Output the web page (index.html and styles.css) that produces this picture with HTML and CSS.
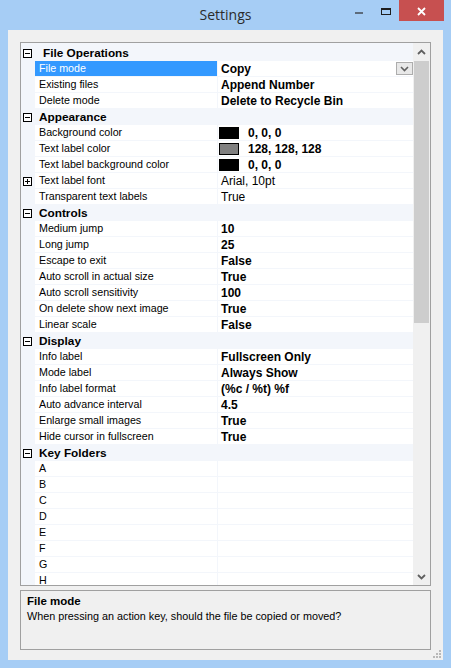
FILE: index.html
```html
<!DOCTYPE html>
<html>
<head>
<meta charset="utf-8">
<title>Settings</title>
<link rel="stylesheet" href="styles.css">
</head>
<body>
<div class="window">
  <div class="titlebar">
    <div></div>
    <div class="title">Settings</div>
    <div class="controls">
      <svg class="ctl" width="26" height="21" viewBox="0 0 26 21"><rect x="8" y="12" width="8" height="2" fill="#5c6b7c"/></svg>
      <svg class="ctl" width="26" height="21" viewBox="0 0 26 21"><rect x="8.5" y="8.5" width="9" height="6" fill="none" stroke="#1e1e1e"/><rect x="8" y="8" width="10" height="2" fill="#1e1e1e"/></svg>
      <svg class="close" width="45" height="21" viewBox="0 0 45 21"><path d="M19 8 L26 15 M26 8 L19 15" stroke="#fff" stroke-width="1.8" fill="none"/></svg>
    </div>
  </div>
  <div class="client">
    <div class="grid">
      <div class="rows">
        <div class="cat"><span class="tog minus"></span><span class="cat-label first">File Operations</span></div>
        <div class="prop sel"><span class="ind"></span><span class="name">File mode</span><span class="val b">Copy<span class="drop"><svg width="9" height="6" viewBox="0 0 9 6"><path d="M1 1 L4.5 4.5 L8 1" stroke="#606060" stroke-width="1.6" fill="none"/></svg></span></span></div>
        <div class="prop"><span class="ind"></span><span class="name">Existing files</span><span class="val b">Append Number</span></div>
        <div class="prop"><span class="ind"></span><span class="name">Delete mode</span><span class="val b">Delete to Recycle Bin</span></div>

        <div class="cat"><span class="tog minus"></span><span class="cat-label">Appearance</span></div>
        <div class="prop"><span class="ind"></span><span class="name">Background color</span><span class="val b"><span class="sw black"></span>0, 0, 0</span></div>
        <div class="prop"><span class="ind"></span><span class="name">Text label color</span><span class="val b"><span class="sw grey"></span>128, 128, 128</span></div>
        <div class="prop"><span class="ind"></span><span class="name">Text label background color</span><span class="val b"><span class="sw black"></span>0, 0, 0</span></div>
        <div class="prop"><span class="ind"><span class="tog plus"></span></span><span class="name">Text label font</span><span class="val">Arial, 10pt</span></div>
        <div class="prop"><span class="ind"></span><span class="name">Transparent text labels</span><span class="val">True</span></div>

        <div class="cat"><span class="tog minus"></span><span class="cat-label">Controls</span></div>
        <div class="prop"><span class="ind"></span><span class="name">Medium jump</span><span class="val b">10</span></div>
        <div class="prop"><span class="ind"></span><span class="name">Long jump</span><span class="val b">25</span></div>
        <div class="prop"><span class="ind"></span><span class="name">Escape to exit</span><span class="val b">False</span></div>
        <div class="prop"><span class="ind"></span><span class="name">Auto scroll in actual size</span><span class="val b">True</span></div>
        <div class="prop"><span class="ind"></span><span class="name">Auto scroll sensitivity</span><span class="val b">100</span></div>
        <div class="prop"><span class="ind"></span><span class="name">On delete show next image</span><span class="val b">True</span></div>
        <div class="prop"><span class="ind"></span><span class="name">Linear scale</span><span class="val b">False</span></div>

        <div class="cat"><span class="tog minus"></span><span class="cat-label">Display</span></div>
        <div class="prop"><span class="ind"></span><span class="name">Info label</span><span class="val b">Fullscreen Only</span></div>
        <div class="prop"><span class="ind"></span><span class="name">Mode label</span><span class="val b">Always Show</span></div>
        <div class="prop"><span class="ind"></span><span class="name">Info label format</span><span class="val b">(%c / %t) %f</span></div>
        <div class="prop"><span class="ind"></span><span class="name">Auto advance interval</span><span class="val b">4.5</span></div>
        <div class="prop"><span class="ind"></span><span class="name">Enlarge small images</span><span class="val b">True</span></div>
        <div class="prop"><span class="ind"></span><span class="name">Hide cursor in fullscreen</span><span class="val b">True</span></div>

        <div class="cat"><span class="tog minus"></span><span class="cat-label">Key Folders</span></div>
        <div class="prop"><span class="ind"></span><span class="name">A</span><span class="val"></span></div>
        <div class="prop"><span class="ind"></span><span class="name">B</span><span class="val"></span></div>
        <div class="prop"><span class="ind"></span><span class="name">C</span><span class="val"></span></div>
        <div class="prop"><span class="ind"></span><span class="name">D</span><span class="val"></span></div>
        <div class="prop"><span class="ind"></span><span class="name">E</span><span class="val"></span></div>
        <div class="prop"><span class="ind"></span><span class="name">F</span><span class="val"></span></div>
        <div class="prop"><span class="ind"></span><span class="name">G</span><span class="val"></span></div>
        <div class="prop"><span class="ind"></span><span class="name">H</span><span class="val"></span></div>
      </div>
      <div class="scrollbar">
        <div class="arrow"><svg width="9" height="6" viewBox="0 0 9 6"><path d="M1 5 L4.5 1.5 L8 5" stroke="#606060" stroke-width="1.8" fill="none"/></svg></div>
        <div class="thumb"></div>
        <div class="track"></div>
        <div class="arrow"><svg width="9" height="6" viewBox="0 0 9 6"><path d="M1 1 L4.5 4.5 L8 1" stroke="#606060" stroke-width="1.8" fill="none"/></svg></div>
      </div>
    </div>
    <div class="help">
      <div class="help-title">File mode</div>
      <div class="help-text">When pressing an action key, should the file be copied or moved?</div>
    </div>
    <svg class="grip" width="9" height="9" viewBox="0 0 9 9">
      <rect x="7" y="1" width="2" height="2" fill="#b8b8b8"/>
      <rect x="4" y="4" width="2" height="2" fill="#b8b8b8"/>
      <rect x="7" y="4" width="2" height="2" fill="#b8b8b8"/>
      <rect x="1" y="7" width="2" height="2" fill="#b8b8b8"/>
      <rect x="4" y="7" width="2" height="2" fill="#b8b8b8"/>
      <rect x="7" y="7" width="2" height="2" fill="#b8b8b8"/>
    </svg>
  </div>
</div>
</body>
</html>
```

FILE: styles.css
```css
* { box-sizing: border-box; }
html, body { margin: 0; padding: 0; }
body {
  width: 451px;
  height: 668px;
  overflow: hidden;
  background: #a6cdf5;
  font-family: "Liberation Sans", Arial, sans-serif;
  color: #000;
}
.window {
  width: 451px;
  height: 668px;
  display: flex;
  flex-direction: column;
}
.titlebar {
  flex: none;
  height: 30px;
  display: grid;
  grid-template-columns: 1fr auto 1fr;
}
.title {
  font-family: "Open Sans", sans-serif;
  font-size: 14px;
  line-height: 30px;
  color: #2b2b2b;
}
.controls {
  display: flex;
  justify-content: flex-end;
  align-items: flex-start;
  padding-right: 7px;
}
.ctl { display: block; width: 26px; height: 21px; }
.close { display: block; width: 45px; height: 21px; background: #c75050; }

.client {
  position: relative;
  margin-left: 8px;
  width: 435px;
  height: 630px;
  background: #f0f0f0;
  padding: 12px 12px 0 12px;
}
.grid {
  height: 544px;
  border: 1px solid #a0a0a0;
  background: #f3f6fb;
  display: flex;
  overflow: hidden;
}
.rows {
  width: 392px;
  flex: none;
  padding-top: 2px;
}
.cat {
  height: 16px;
  display: flex;
  align-items: center;
  background: #f3f6fb;
}
.cat .tog { margin-left: 2px; }
.cat-label {
  margin-left: 7px;
  font-weight: bold;
  font-size: 11.8px;
  line-height: 16px;
}
.cat-label.first { margin-left: 11px; }

.tog {
  position: relative;
  display: block;
  width: 9px;
  height: 9px;
  border: 1px solid #000;
  background: #fff;
  flex: none;
}
.tog::before {
  content: "";
  position: absolute;
  left: 1px;
  top: 3px;
  width: 5px;
  height: 1px;
  background: #000;
}
.tog.plus::after {
  content: "";
  position: absolute;
  left: 3px;
  top: 1px;
  width: 1px;
  height: 5px;
  background: #000;
}

.prop {
  height: 16px;
  display: flex;
}
.ind {
  width: 14px;
  flex: none;
  display: flex;
  align-items: center;
  padding-left: 2px;
}
.name {
  width: 183px;
  flex: none;
  padding-left: 4px;
  font-size: 10.7px;
  line-height: 15px;
  background: #fff;
  border-right: 1px solid #f3f6fb;
  border-bottom: 1px solid #f3f6fb;
  white-space: nowrap;
  overflow: hidden;
}
.sel .name {
  background: #3399ff;
  color: #fff;
}
.val {
  flex: 1;
  display: flex;
  align-items: center;
  padding-left: 3px;
  font-size: 12px;
  height: 16px;
  background: #fff;
  border-bottom: 1px solid #f3f6fb;
  white-space: nowrap;
}
.val.b { font-weight: bold; }
.sw {
  display: block;
  width: 20px;
  height: 12px;
  margin-left: -2px;
  margin-right: 9px;
  flex: none;
}
.sw.black { background: #000; }
.sw.grey { background: #808080; border: 1px solid #000; }
.drop {
  margin-left: auto;
  width: 17px;
  height: 13px;
  border: 1px solid #adadad;
  background: #e8e8e8;
  display: flex;
  align-items: center;
  justify-content: center;
}
.drop svg { display: block; }

.scrollbar {
  width: 17px;
  flex: none;
  display: flex;
  flex-direction: column;
  background: #f0f0f0;
}
.arrow {
  height: 17px;
  flex: none;
  display: flex;
  align-items: center;
  justify-content: center;
}
.arrow svg { display: block; }
.thumb {
  height: 262px;
  margin: 1px 1px 0 1px;
  background: #cdcdcd;
  flex: none;
}
.track { flex: 1; }

.help {
  margin-top: 4px;
  height: 60px;
  border: 1px solid #a0a0a0;
  background: #f0f0f0;
  padding: 3px 6px;
}
.help-title {
  font-weight: bold;
  font-size: 11.5px;
  line-height: 15px;
}
.help-text {
  font-size: 10.8px;
  line-height: 15px;
}
.grip {
  position: absolute;
  right: 2px;
  bottom: 2px;
  display: block;
}
```
